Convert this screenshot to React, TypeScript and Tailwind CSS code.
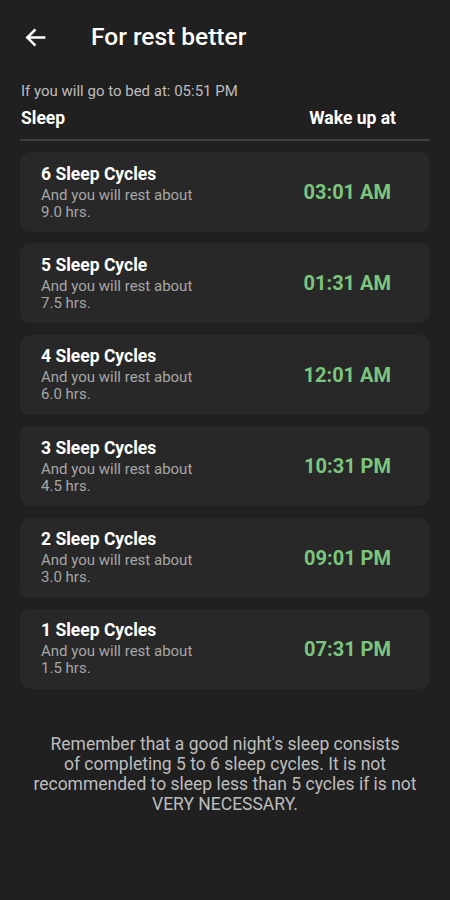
import React from "react";

const rows = [
  { t: "6 Sleep Cycles", h: "9.0", w: "03:01 AM" },
  { t: "5 Sleep Cycle", h: "7.5", w: "01:31 AM" },
  { t: "4 Sleep Cycles", h: "6.0", w: "12:01 AM" },
  { t: "3 Sleep Cycles", h: "4.5", w: "10:31 PM" },
  { t: "2 Sleep Cycles", h: "3.0", w: "09:01 PM" },
  { t: "1 Sleep Cycles", h: "1.5", w: "07:31 PM" },
];

export default function App() {
  return (
    <div
      className="w-[450px] h-[900px] bg-[#202020] text-white flex flex-col"
      style={{ fontFamily: "Roboto, 'Noto Sans', sans-serif" }}
    >
      <div className="h-[74px] flex items-center pl-[24px]">
        <svg width="23" height="23" viewBox="0 0 24 24" fill="none" stroke="white" strokeWidth="2.6" strokeLinecap="square">
          <path d="M21 12H4" />
          <path d="M11 4.5L3.5 12l7.5 7.5" strokeLinejoin="miter" />
        </svg>
        <div className="ml-[44px] text-[24.5px] font-medium leading-none">For rest better</div>
      </div>
      <div className="px-[20px]">
        <div className="text-[15px] text-[#bdbdbd] leading-[18px] mt-[8px] pl-[1px]">If you will go to bed at: 05:51 PM</div>
        <div className="flex justify-between items-center mt-[8px] pr-[34px] pl-[1px] h-[20px]">
          <span className="text-[17.5px] font-bold">Sleep</span>
          <span className="text-[17.5px] font-bold">Wake up at</span>
        </div>
        <div className="h-[2px] bg-[#3e3e3e] mt-[11px]" />
        <div className="flex flex-col gap-[11.4px] mt-[11px]">
          {rows.map((r) => (
            <div key={r.t} className="bg-[#282828] rounded-[10px] h-[80px] flex items-center justify-between pl-[21px] pr-[39px]">
              <div className="flex flex-col">
                <div className="text-[17.5px] font-bold leading-[20px]">{r.t}</div>
                <div className="text-[15px] text-[#a6a6a6] leading-[17px] w-[165px] mt-[3px]">
                  And you will rest about {r.h} hrs.
                </div>
              </div>
              <div className="text-[20px] font-bold text-[#7bc67e]">{r.w}</div>
            </div>
          ))}
        </div>
        <div className="text-center text-[17.5px] leading-[20px] text-[#bdbdbd] mt-[45px] whitespace-nowrap">
          Remember that a good night's sleep consists
          <br />
          of completing 5 to 6 sleep cycles. It is not
          <br />
          recommended to sleep less than 5 cycles if is not
          <br />
          VERY NECESSARY.
        </div>
      </div>
    </div>
  );
}
